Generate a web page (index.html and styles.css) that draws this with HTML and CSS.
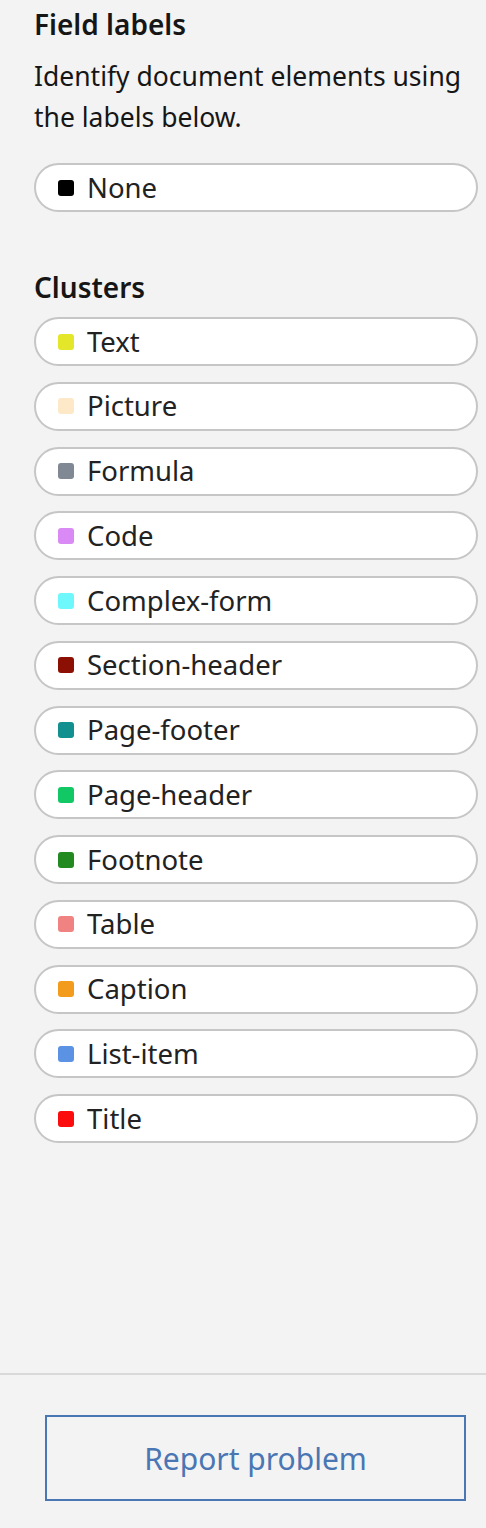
FILE: index.html
```html
<!DOCTYPE html>
<html lang="en">
<head>
<meta charset="utf-8">
<title>Field labels</title>
<link rel="stylesheet" href="styles.css">
</head>
<body>
<div class="page">
  <div class="panel">
    <h2 class="heading">Field labels</h2>
    <p class="desc">Identify document elements using the labels below.</p>
    <div class="pill first"><span class="swatch" style="background:#000000"></span><span class="label">None</span></div>

    <h2 class="heading clusters">Clusters</h2>
    <div class="list">
      <div class="pill"><span class="swatch" style="background:#e4e62a"></span><span class="label">Text</span></div>
      <div class="pill"><span class="swatch" style="background:#fde8c8"></span><span class="label">Picture</span></div>
      <div class="pill"><span class="swatch" style="background:#7f8893"></span><span class="label">Formula</span></div>
      <div class="pill"><span class="swatch" style="background:#d98af5"></span><span class="label">Code</span></div>
      <div class="pill"><span class="swatch" style="background:#6ef8fc"></span><span class="label">Complex-form</span></div>
      <div class="pill"><span class="swatch" style="background:#8b1003"></span><span class="label">Section-header</span></div>
      <div class="pill"><span class="swatch" style="background:#12908f"></span><span class="label">Page-footer</span></div>
      <div class="pill"><span class="swatch" style="background:#12c865"></span><span class="label">Page-header</span></div>
      <div class="pill"><span class="swatch" style="background:#238a22"></span><span class="label">Footnote</span></div>
      <div class="pill"><span class="swatch" style="background:#f08282"></span><span class="label">Table</span></div>
      <div class="pill"><span class="swatch" style="background:#f39b1c"></span><span class="label">Caption</span></div>
      <div class="pill"><span class="swatch" style="background:#5b92e3"></span><span class="label">List-item</span></div>
      <div class="pill"><span class="swatch" style="background:#fc0d0d"></span><span class="label">Title</span></div>
    </div>
  </div>
  <div class="spacer"></div>
  <div class="footer">
    <button class="report" type="button">Report problem</button>
  </div>
</div>
</body>
</html>
```

FILE: styles.css
```css
* {
  box-sizing: border-box;
}

html, body {
  margin: 0;
  padding: 0;
  height: 100%;
}

body {
  background: #f3f3f3;
  font-family: "Noto Sans", "Open Sans", sans-serif;
  color: #161616;
}

.page {
  display: flex;
  flex-direction: column;
  min-height: 100vh;
}

.panel {
  padding: 6px 8px 0 34px;
}

.heading {
  margin: 0;
  font-size: 28px;
  line-height: 36px;
  font-weight: 600;
  color: #161616;
}

.desc {
  margin: 13.5px 0 0;
  font-size: 26.5px;
  line-height: 41px;
  color: #161616;
}

.pill {
  display: flex;
  align-items: center;
  height: 49px;
  border: 2px solid #c6c6c6;
  border-radius: 25px;
  background: #ffffff;
  padding-left: 22px;
}

.pill.first {
  margin-top: 25.5px;
}

.swatch {
  width: 16px;
  height: 16px;
  border-radius: 3px;
  flex: none;
}

.label {
  margin-left: 13px;
  font-size: 27.5px;
  line-height: 32px;
  color: #222222;
}

.clusters {
  margin-top: 57px;
}

.list {
  display: flex;
  flex-direction: column;
  gap: 15.75px;
  margin-top: 12px;
}

.spacer {
  flex: 1;
}

.footer {
  border-top: 2px solid #d9d9d9;
  padding: 40px 20px 27px 45px;
}

.report {
  display: block;
  width: 421px;
  height: 86px;
  border: 2px solid #4a76b3;
  background: transparent;
  color: #4a76b3;
  font-family: "Noto Sans", "Open Sans", sans-serif;
  font-size: 30px;
  cursor: pointer;
}
```
